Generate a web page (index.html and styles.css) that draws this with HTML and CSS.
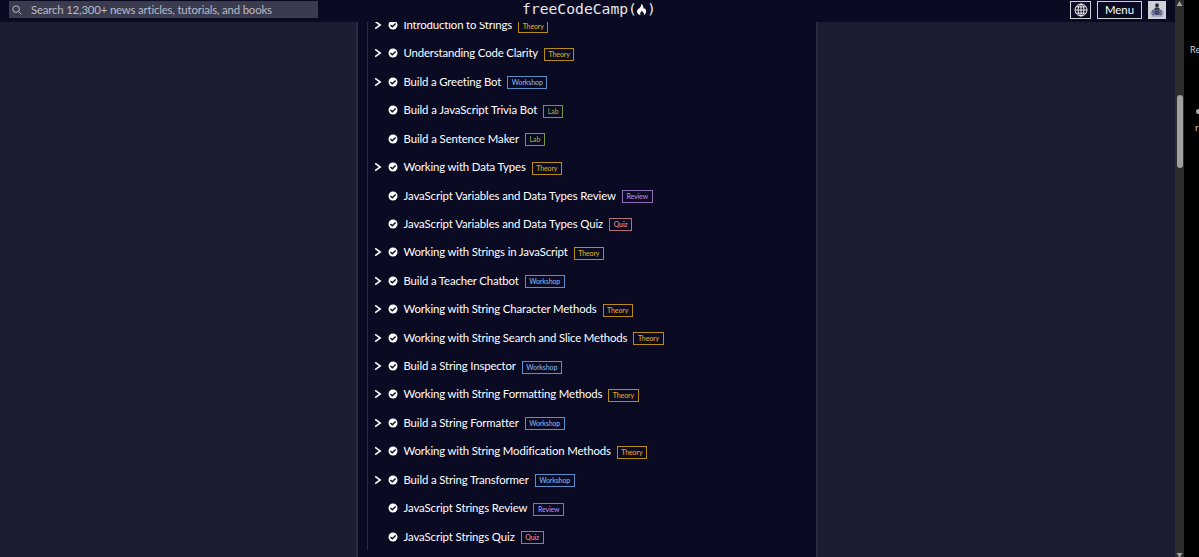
FILE: index.html
```html
<!DOCTYPE html>
<html lang="en">
<head>
  <meta charset="UTF-8">
  <title>freeCodeCamp</title>
  <link rel="stylesheet" href="styles.css">
</head>
<body>
  <svg width="0" height="0" class="defs">
    <symbol id="arrow" viewBox="0 0 8 10"><path d="M1.2 1.3 6.2 5 1.2 8.7" fill="none" stroke="#fff" stroke-width="1.6"/></symbol>
    <symbol id="check" viewBox="0 0 10 10"><circle cx="5" cy="5" r="4.5" fill="#fff"/><path d="M2.5 5.1 4.3 6.8 7.6 3.5" fill="none" stroke="#0a0a23" stroke-width="1.4"/></symbol>
  </svg>

  <div class="page">
    <header class="header">
      <div class="search">
        <svg class="search-icon" viewBox="0 0 10 10"><circle cx="4.1" cy="4.1" r="3.3"/><path d="M6.5 6.5 9.3 9.3"/></svg>
        <span>Search 12,300+ news articles, tutorials, and books</span>
      </div>
      <div class="logo">
        <span class="logo-text">freeCodeCamp</span><span class="paren">(</span>
        <svg class="flame" viewBox="0 0 11 13"><path d="M5.2.8C7.3 2.2 7 4 7.7 5.5c.5 1 .9.4.7-.7 1.4 1.5 2 3 1.7 4.5-.3 1.4-1.3 2.4-2.8 2.9.9-.9 1-2 .2-3-.2.7-.6.8-.8.2-.2-.8-.1-1.4-.9-2-.1 1.2-1.7 1.8-1.7 3.2 0 .7.3 1.2.8 1.6C2.7 11.7 1 10.5 1 8.5 1 6.300 4 5.300 4.900 3.200c.3-.8.5-1.500.3-2.400z" fill="#fff"/></svg>
        <span class="paren">)</span>
      </div>
      <div class="actions">
        <button class="btn lang">
          <svg viewBox="0 0 14 14"><circle cx="7" cy="7" r="6"/><ellipse cx="7" cy="7" rx="2.9" ry="6"/><path d="M7 1v12M1 7h12M2 3.900h10M2 10.100h10"/></svg>
        </button>
        <button class="btn menu">Menu</button>
        <div class="avatar">
          <svg viewBox="0 0 18 18"><circle cx="9" cy="4.200" r="1.900" fill="#262640"/><path d="M6.300 9.500V8q0-1.800 2.700-1.800T11.700 8v1.500z" fill="#34344e"/><path d="M4 8.800h10v5.600H4z" fill="#66688f"/><path d="M2.500 10.200h2v3.200h-2zM13.500 10.200h2v3.200h-2zM3.500 14.300h11v1.500h-11z" fill="#9495bb"/><circle cx="9" cy="11.600" r="1.900" fill="#262640"/><circle cx="9" cy="11.600" r=".7" fill="#c5c5dc"/></svg>
        </div>
      </div>
    </header>

    <main class="panel">
      <ul class="list">
        <li><svg class="arrow"><use href="#arrow"/></svg><svg class="check"><use href="#check"/></svg><span>Introduction to Strings</span><b class="tag theory">Theory</b></li>
        <li><svg class="arrow"><use href="#arrow"/></svg><svg class="check"><use href="#check"/></svg><span>Understanding Code Clarity</span><b class="tag theory">Theory</b></li>
        <li><svg class="arrow"><use href="#arrow"/></svg><svg class="check"><use href="#check"/></svg><span>Build a Greeting Bot</span><b class="tag workshop">Workshop</b></li>
        <li class="single"><svg class="check"><use href="#check"/></svg><span>Build a JavaScript Trivia Bot</span><b class="tag lab">Lab</b></li>
        <li class="single"><svg class="check"><use href="#check"/></svg><span>Build a Sentence Maker</span><b class="tag lab">Lab</b></li>
        <li><svg class="arrow"><use href="#arrow"/></svg><svg class="check"><use href="#check"/></svg><span>Working with Data Types</span><b class="tag theory">Theory</b></li>
        <li class="single"><svg class="check"><use href="#check"/></svg><span>JavaScript Variables and Data Types Review</span><b class="tag review">Review</b></li>
        <li class="single"><svg class="check"><use href="#check"/></svg><span>JavaScript Variables and Data Types Quiz</span><b class="tag quiz">Quiz</b></li>
        <li><svg class="arrow"><use href="#arrow"/></svg><svg class="check"><use href="#check"/></svg><span>Working with Strings in JavaScript</span><b class="tag theory">Theory</b></li>
        <li><svg class="arrow"><use href="#arrow"/></svg><svg class="check"><use href="#check"/></svg><span>Build a Teacher Chatbot</span><b class="tag workshop">Workshop</b></li>
        <li><svg class="arrow"><use href="#arrow"/></svg><svg class="check"><use href="#check"/></svg><span>Working with String Character Methods</span><b class="tag theory">Theory</b></li>
        <li><svg class="arrow"><use href="#arrow"/></svg><svg class="check"><use href="#check"/></svg><span>Working with String Search and Slice Methods</span><b class="tag theory">Theory</b></li>
        <li><svg class="arrow"><use href="#arrow"/></svg><svg class="check"><use href="#check"/></svg><span>Build a String Inspector</span><b class="tag workshop">Workshop</b></li>
        <li><svg class="arrow"><use href="#arrow"/></svg><svg class="check"><use href="#check"/></svg><span>Working with String Formatting Methods</span><b class="tag theory">Theory</b></li>
        <li><svg class="arrow"><use href="#arrow"/></svg><svg class="check"><use href="#check"/></svg><span>Build a String Formatter</span><b class="tag workshop">Workshop</b></li>
        <li><svg class="arrow"><use href="#arrow"/></svg><svg class="check"><use href="#check"/></svg><span>Working with String Modification Methods</span><b class="tag theory">Theory</b></li>
        <li><svg class="arrow"><use href="#arrow"/></svg><svg class="check"><use href="#check"/></svg><span>Build a String Transformer</span><b class="tag workshop">Workshop</b></li>
        <li class="single"><svg class="check"><use href="#check"/></svg><span>JavaScript Strings Review</span><b class="tag review">Review</b></li>
        <li class="single"><svg class="check"><use href="#check"/></svg><span>JavaScript Strings Quiz</span><b class="tag quiz">Quiz</b></li>
      </ul>
    </main>
  </div>

  <div class="scrollbar">
    <svg viewBox="0 0 7 5"><path d="M3.500 0 6.500 5h-6z"/></svg>
    <div class="thumb"></div>
    <svg viewBox="0 0 7 5"><path d="M.5 0h6l-3 5z"/></svg>
  </div>

  <aside class="side">
    <span class="side-re">Re</span>
    <i class="side-dot"></i>
    <span class="side-ru">ru</span>
  </aside>
</body>
</html>
```
FILE: styles.css
```css
* {box-sizing: border-box;}
body {margin: 0; height: 557px; display: flex; overflow: hidden; background: #000; color: #fff; font-family: Lato, sans-serif;}
.defs {position: absolute;}

.page {position: relative; width: 1175px; height: 557px; overflow: hidden; background: #1b1b32;}
.header {position: absolute; top: 0; left: 0; right: 0; height: 21.5px; display: grid; grid-template-columns: 1fr auto 1fr; background: #0a0a23;}
.search {width: 309px; height: 17px; margin: 1px 0 0 9px; padding-left: 3px; display: flex; align-items: center; gap: 9px; background: #3b3b4f; color: #b9b9c4; font-size: 11.4px; letter-spacing: -.18px; white-space: nowrap;}
.search-icon {width: 10px; height: 10px; fill: none; stroke: #b9b9c4; stroke-width: 1;}
.logo {display: flex; align-items: flex-start; height: 20px; padding-left: 2px; line-height: 18px; font-family: "DejaVu Sans Mono", monospace; font-size: 14.7px; color: #e6e6ea;}
.logo-text {width: 106px;}
.paren {width: 8px; text-align: center;}
.flame {width: 11px; height: 13px; margin-top: 3px;}
.actions {display: flex; justify-content: flex-end; gap: 6px; padding: 1px 9px 0 0;}
.btn {height: 18px; padding: 0; border: 1px solid #d0d0d5; background: #0a0a23; color: #fff; font: 11.4px/15px Lato, sans-serif;}
.lang {width: 21px; display: flex; align-items: center; justify-content: center;}
.lang svg {width: 14px; height: 14px; fill: none; stroke: #fff; stroke-width: .9;}
.menu {width: 45px; padding-bottom: 1px;}
.avatar {width: 18px; height: 18px; background: #d0d0d5;}
.avatar svg {display: block; width: 18px; height: 18px;}

.panel {width: 462px; height: 557px; margin-left: 356px; padding-left: 9px; border: solid #2a2a40; border-width: 0 2px; background: #0a0a23;}
.list {margin: 0; padding: 10.8px 0 0 6px; height: 550px; list-style: none; border-left: 1px solid #2a2a40;}
.list li {height: 28.43px; display: flex; align-items: center; font-size: 11.4px; letter-spacing: -.15px; white-space: nowrap; line-height: 16px;}
.list li span {margin-left: 5.5px;}
.list .single {padding-left: 14px; letter-spacing: -.1px;}
.arrow {width: 8px; height: 10px; margin-right: 6px;}
.check {width: 10px; height: 10px;}
.tag {height: 13px; margin: 2px 0 0 6px; padding: 0 3.5px; border: 1px solid; font-size: 7px; font-weight: 500; letter-spacing: -.12px; line-height: 11px;}
.theory {color: #e0ab1c; border-color: #b88c12;}
.workshop {color: #82b3ee; border-color: #5f8fc8;}
.lab {color: #8cb54c; border-color: #78983f;}
.review {color: #b58be6; border-color: #8d6fb4;}
.quiz {color: #e58f98; border-color: #b56f78;}

.scrollbar {width: 9px; height: 557px; padding: 1px 1px 0; display: flex; flex-direction: column; align-items: center; background: #2c2c2c;}
.scrollbar svg {width: 7px; height: 5px; flex: none; fill: #a0a0a0;}
.thumb {width: 6px; height: 73px; margin: 89px 0 385px; flex: none; border-radius: 3px; background: #a0a0a0;}

.side {width: 15px; height: 557px; padding: 44px 0 0 6px; overflow: hidden; display: flex; flex-direction: column; color: #ddd; font: 9px/12px "Open Sans", sans-serif;}
.side-dot {width: 6px; height: 5px; margin: 53px 0 0 6px; flex: none; border-radius: 3px; background: #aaa;}
.side-ru {margin: 8px 0 0 5px;}
```
